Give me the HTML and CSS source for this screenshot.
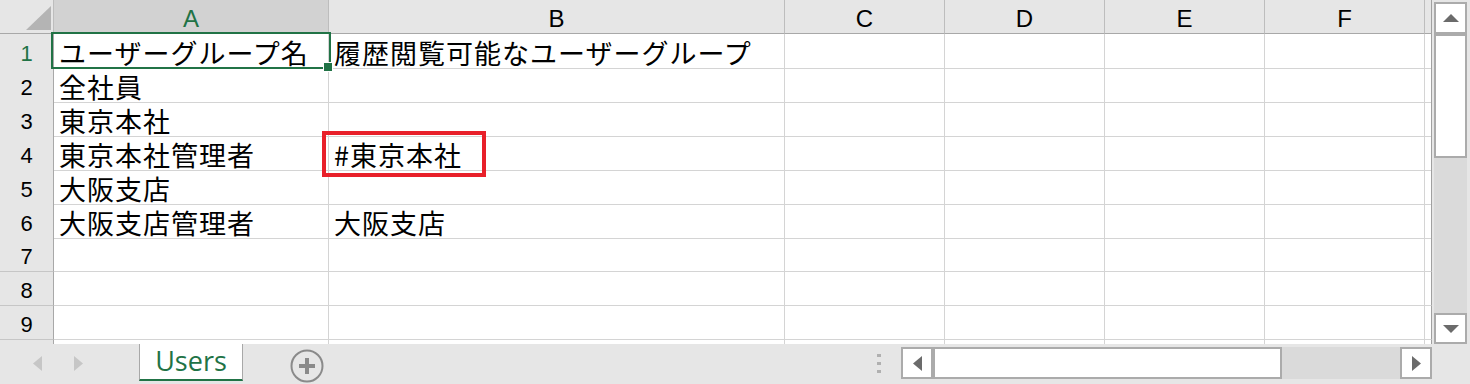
FILE: index.html
```html
<!DOCTYPE html>
<html lang="ja">
 <head>
   <meta charset="UTF-8">
   <title>Users</title>
   <link rel="stylesheet" href="styles.css">
 </head>
 <body>
  <div class="main">
   <!-- シート本体 -->
   <div class="sheet">
    <div class="row head">
     <div class="corner"><span class="tri"></span></div>
     <div class="ch sel">A</div><div class="ch">B</div><div class="ch">C</div><div class="ch">D</div><div class="ch">E</div><div class="ch">F</div><div class="ch end"></div>
    </div>
    <div class="row">
     <div class="rh sel">1</div><div class="c">ユーザーグループ名</div><div class="c">履歴閲覧可能なユーザーグループ</div><div class="c"></div><div class="c"></div><div class="c"></div><div class="c"></div><div class="c end"></div>
    </div>
    <div class="row">
     <div class="rh">2</div><div class="c">全社員</div><div class="c"></div><div class="c"></div><div class="c"></div><div class="c"></div><div class="c"></div><div class="c end"></div>
    </div>
    <div class="row">
     <div class="rh">3</div><div class="c">東京本社</div><div class="c"></div><div class="c"></div><div class="c"></div><div class="c"></div><div class="c"></div><div class="c end"></div>
    </div>
    <div class="row">
     <div class="rh">4</div><div class="c">東京本社管理者</div><div class="c">#東京本社</div><div class="c"></div><div class="c"></div><div class="c"></div><div class="c"></div><div class="c end"></div>
    </div>
    <div class="row">
     <div class="rh">5</div><div class="c">大阪支店</div><div class="c"></div><div class="c"></div><div class="c"></div><div class="c"></div><div class="c"></div><div class="c end"></div>
    </div>
    <div class="row">
     <div class="rh">6</div><div class="c">大阪支店管理者</div><div class="c">大阪支店</div><div class="c"></div><div class="c"></div><div class="c"></div><div class="c"></div><div class="c end"></div>
    </div>
    <div class="row">
     <div class="rh">7</div><div class="c"></div><div class="c"></div><div class="c"></div><div class="c"></div><div class="c"></div><div class="c"></div><div class="c end"></div>
    </div>
    <div class="row">
     <div class="rh">8</div><div class="c"></div><div class="c"></div><div class="c"></div><div class="c"></div><div class="c"></div><div class="c"></div><div class="c end"></div>
    </div>
    <div class="row">
     <div class="rh">9</div><div class="c"></div><div class="c"></div><div class="c"></div><div class="c"></div><div class="c"></div><div class="c"></div><div class="c end"></div>
    </div>
    <div class="row last">
     <div class="rh"></div><div class="c"></div><div class="c"></div><div class="c"></div><div class="c"></div><div class="c"></div><div class="c"></div><div class="c end"></div>
    </div>

    <!-- 選択セルと赤枠 -->
    <div class="selbox"><span class="handle"></span></div>
    <div class="mark"></div>
   </div>

   <!-- 縦スクロールバー -->
   <div class="vscroll">
    <div class="sbtn up"><svg width="16" height="8"><polygon points="0,8 16,8 8,0" fill="#6b6b6b"/></svg></div>
    <div class="vthumb"></div>
    <div class="vtrack"></div>
    <div class="sbtn down"><svg width="16" height="8"><polygon points="0,0 16,0 8,8" fill="#6b6b6b"/></svg></div>
   </div>
  </div>

  <!-- シート見出しバー -->
  <div class="tabbar">
   <div class="nav">
    <svg width="9" height="15"><polygon points="9,0 9,15 0,7.5" fill="#c6c6c6"/></svg>
    <svg width="9" height="15"><polygon points="0,0 0,15 9,7.5" fill="#c6c6c6"/></svg>
   </div>
   <div class="tab">Users</div>
   <div class="add">
    <svg width="34" height="34">
     <circle cx="17" cy="17" r="15.5" fill="none" stroke="#8a8a8a" stroke-width="2"/>
     <rect x="9" y="15" width="16" height="4" fill="#8a8a8a"/>
     <rect x="15" y="9" width="4" height="16" fill="#8a8a8a"/>
    </svg>
   </div>
   <div class="dots"><i></i><i></i><i></i></div>
   <div class="hscroll">
    <div class="sbtn left"><svg width="9" height="15"><polygon points="9,0 9,15 0,7.5" fill="#6b6b6b"/></svg></div>
    <div class="hthumb"></div>
    <div class="htrack"></div>
    <div class="sbtn right"><svg width="9" height="15"><polygon points="0,0 0,15 9,7.5" fill="#6b6b6b"/></svg></div>
   </div>
  </div>
 </body>
</html>
```

FILE: styles.css
```css
body{
	margin:0;
	width:1470px;
	height:384px;
	overflow:hidden;
	background:#e6e6e6;
	font-family:"Noto Sans CJK JP", sans-serif;
}
.main{
	display:flex;
	height:344px;
}
/* シート */
.sheet{
	position:relative;
	width:1432px;
	background:#fff;
}
.row{
	display:grid;
	grid-template-columns:54px 275px 456px 160px 160px 160px 160px 7px;
	height:34px;
}
.row.last{
	height:4px;
	overflow:hidden;
}
.row > div{
	box-sizing:border-box;
	border-right:1px solid #d4d4d4;
	border-bottom:1px solid #d4d4d4;
	white-space:nowrap;
}
.row.last > div{
	border-bottom-color:#a0a0a0;
}
.row > div.end{
	border-right-color:#a0a0a0;
}
/* 列見出し */
.head > div{
	background:#e6e6e6;
	border-right-color:#bdbdbd;
	border-bottom-color:#a8a8a8;
}
.ch{
	display:flex;
	justify-content:center;
	align-items:center;
	padding-top:5px;
	font-family:"Liberation Sans", sans-serif;
	font-size:24px;
	color:#000;
}
.ch.sel, .rh.sel{
	background:#d2d2d2;
	color:#217346;
}
.corner{
	display:flex;
	justify-content:flex-end;
	align-items:flex-end;
	padding:0 2px 3px 0;
}
.tri{
	width:0;
	height:0;
	border-left:25px solid transparent;
	border-bottom:24px solid #b4b4b4;
}
/* 行見出し */
.row > .rh{
	display:flex;
	justify-content:center;
	align-items:center;
	padding-top:5px;
	background:#e6e6e6;
	border-right-color:#a8a8a8;
	border-bottom-color:#c6c6c6;
	font-family:"Liberation Sans", sans-serif;
	font-size:22px;
}
.c{
	display:flex;
	align-items:center;
	padding:4px 0 0 5px;
	font-size:27px;
	line-height:30px;
	letter-spacing:1px;
	color:#000;
}
/* 選択枠 */
.selbox{
	position:absolute;
	left:51px;
	top:32px;
	width:276px;
	height:33px;
	border:2px solid #217346;
}
.handle{
	position:absolute;
	right:-3px;
	bottom:-4px;
	width:8px;
	height:8px;
	background:#217346;
	outline:1px solid #fff;
}
.mark{
	position:absolute;
	left:322px;
	top:131px;
	width:156px;
	height:38px;
	border:4px solid #e8202a;
}
/* スクロールバー */
.vscroll{
	display:flex;
	flex-direction:column;
	width:33px;
	margin-left:2px;
	padding-top:2px;
}
.sbtn{
	box-sizing:border-box;
	display:flex;
	justify-content:center;
	align-items:center;
	background:#fff;
	border:2px solid #ababab;
}
.sbtn.up{
	height:32px;
}
.sbtn.down{
	height:31px;
}
.vthumb{
	box-sizing:border-box;
	height:124px;
	background:#fff;
	border:2px solid #ababab;
}
.vtrack{
	flex:1;
	background:#dadada;
}
/* 下のバー */
.tabbar{
	display:flex;
	height:40px;
}
.nav{
	display:flex;
	align-items:center;
	gap:32px;
	width:139px;
	box-sizing:border-box;
	padding:0 0 2px 33px;
}
.tab{
	box-sizing:border-box;
	width:104px;
	height:37px;
	background:#fff;
	border-left:1px solid #a8a8a8;
	border-right:1px solid #a8a8a8;
	border-bottom:2px solid #217346;
	text-align:center;
	font-family:"Open Sans", sans-serif;
	font-size:27px;
	line-height:33px;
	color:#217346;
}
.add{
	margin:5px 0 0 47px;
	height:34px;
}
.dots{
	display:flex;
	flex-direction:column;
	gap:5px;
	margin:10px 20px 0 auto;
}
.dots i{
	display:block;
	width:4px;
	height:3px;
	background:#b0b0b0;
}
.hscroll{
	display:flex;
	width:531px;
	height:32px;
	margin:3px 38px 0 0;
}
.sbtn.left, .sbtn.right{
	width:32px;
}
.hthumb{
	box-sizing:border-box;
	width:349px;
	background:#fff;
	border:2px solid #ababab;
}
.htrack{
	flex:1;
	background:#dadada;
}
```
